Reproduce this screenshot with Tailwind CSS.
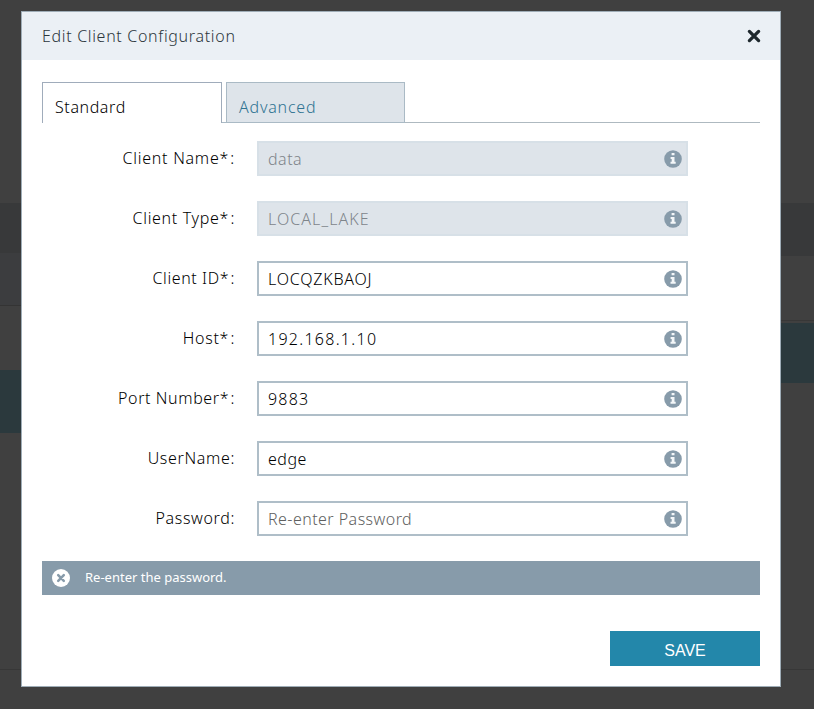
<!DOCTYPE html>
<html lang="en">
<head>
<meta charset="utf-8">
<title>Edit Client Configuration</title>
<script src="https://cdn.jsdelivr.net/npm/@tailwindcss/browser@4"></script>
</head>
<body class="relative flex h-[709px] w-[814px] justify-between overflow-hidden bg-[#404040] font-['Noto_Sans','Open_Sans',sans-serif] text-[16px] font-light text-black">
  <svg class="hidden">
    <symbol id="info" viewBox="0 0 18 18">
      <circle cx="9" cy="9" r="8.8" fill="#879baa"/>
      <path fill="#f4f7f9" d="M7.6 3h2.9v2.3H7.6zM6.6 7.1h3.9v4.7h1.2v2H6.5v-2h1.2V9.1H6.6z"/>
    </symbol>
  </svg>

  <!-- Dimmed page behind the dialog -->
  <div class="flex w-[22px] flex-col">
    <div class="h-[203px]"></div>
    <div class="h-[50px] bg-[#38393a]"></div>
    <div class="h-[52px] bg-[#3c3d3f]"></div>
    <div class="h-px bg-[#343434]"></div>
    <div class="h-[64px]"></div>
    <div class="h-[63px] bg-[#2b393d]"></div>
    <div class="h-[236px]"></div>
    <div class="h-px bg-[#373737]"></div>
  </div>
  <div class="flex w-[34px] flex-col">
    <div class="h-[203px]"></div>
    <div class="h-[53px] bg-[#38393a]"></div>
    <div class="h-[64px]"></div>
    <div class="h-px bg-[#373737]"></div>
    <div class="h-[2px]"></div>
    <div class="h-[60px] bg-[#2b393d]"></div>
    <div class="h-[286px]"></div>
    <div class="h-px bg-[#373737]"></div>
  </div>

  <div class="absolute left-[21px] top-[11px] flex h-[676px] w-[760px] flex-col border border-[#9fadb7] bg-white">
    <header class="flex h-[48px] shrink-0 items-center justify-between bg-[#ebf0f5] pl-5 pr-[19px]">
      <h1 class="font-light tracking-[0.68px] text-[#2c363b]">Edit Client Configuration</h1>
      <svg class="size-[14px]" viewBox="0 0 14 14"><path d="M2.4 2.4l9.2 9.2M11.6 2.4l-9.2 9.2" stroke="#1e282d" stroke-width="3.3" stroke-linecap="round"/></svg>
    </header>

    <nav class="mx-5 mt-[22px] flex h-[41px] shrink-0">
      <div class="flex w-[180px] items-end border border-b-0 border-[#a0acbb] px-3 pb-[4px] tracking-[0.6px]"><span>Standard</span></div>
      <div class="w-1 border-b border-[#aabac5]"></div>
      <div class="flex w-[179px] items-end border border-[#aabac5] bg-[#dee4ea] px-3 pb-[3px] tracking-[0.8px] text-[#2f7392]"><span>Advanced</span></div>
      <div class="flex-1 border-b border-[#aeb9c0]"></div>
    </nav>

    <form class="mt-[18px] flex flex-col gap-[25px] tracking-[0.5px]">
      <div class="flex h-[35px]"><label class="w-[213px] pt-[5px] text-right tracking-[0.75px]">Client Name<span class="tracking-[2px]">*</span>:</label><div class="ml-[22px] flex w-[431px] items-center justify-between border-2 border-[#d7e0e7] bg-[#dee4ea] pl-[9px] pr-1 text-[#7f858b]"><span>data</span><svg class="size-[18px]"><use href="#info"/></svg></div></div>
      <div class="flex h-[35px]"><label class="w-[213px] pt-[5px] text-right tracking-[0.68px]">Client Type<span class="tracking-[2px]">*</span>:</label><div class="ml-[22px] flex w-[431px] items-center justify-between border-2 border-[#d7e0e7] bg-[#dee4ea] pl-[9px] pr-1 text-[#7f858b]"><span class="tracking-[1.05px]">LOCAL_LAKE</span><svg class="size-[18px]"><use href="#info"/></svg></div></div>
      <div class="flex h-[35px]"><label class="w-[213px] pt-[5px] text-right tracking-[0.6px]">Client ID<span class="tracking-[2px]">*</span>:</label><div class="ml-[22px] flex w-[431px] items-center justify-between border-2 border-[#afbec8] pl-[9px] pr-1"><span class="tracking-[0.8px]">LOCQZKBAOJ</span><svg class="size-[18px]"><use href="#info"/></svg></div></div>
      <div class="flex h-[35px]"><label class="w-[213px] pt-[5px] text-right tracking-[0.7px]">Host<span class="tracking-[2px]">*</span>:</label><div class="ml-[22px] flex w-[431px] items-center justify-between border-2 border-[#afbec8] pl-[9px] pr-1"><span class="tracking-[1.28px]">192.168.1.10</span><svg class="size-[18px]"><use href="#info"/></svg></div></div>
      <div class="flex h-[35px]"><label class="w-[213px] pt-[5px] text-right tracking-[0.6px]">Port Number<span class="tracking-[2px]">*</span>:</label><div class="ml-[22px] flex w-[431px] items-center justify-between border-2 border-[#afbec8] pl-[9px] pr-1"><span class="tracking-[1.2px]">9883</span><svg class="size-[18px]"><use href="#info"/></svg></div></div>
      <div class="flex h-[35px]"><label class="w-[213px] pt-[5px] text-right tracking-[0.65px]">UserName:</label><div class="ml-[22px] flex w-[431px] items-center justify-between border-2 border-[#afbec8] pl-[9px] pr-1"><span>edge</span><svg class="size-[18px]"><use href="#info"/></svg></div></div>
      <div class="flex h-[35px]"><label class="w-[213px] pt-[5px] text-right tracking-[0.65px]">Password:</label><div class="ml-[22px] flex w-[431px] items-center justify-between border-2 border-[#afbec8] pl-[9px] pr-1 text-[#606060]"><span class="tracking-[0.45px]">Re-enter Password</span><svg class="size-[18px]"><use href="#info"/></svg></div></div>
    </form>

    <div class="mx-5 mt-[25px] flex h-[34px] shrink-0 items-center bg-[#879baa] pl-[10px] text-[13px] font-normal text-white">
      <svg class="size-[18px]" viewBox="0 0 18 18"><circle cx="9" cy="9" r="9" fill="#fff"/><path d="M6.2 6.2l5.6 5.6M11.8 6.2l-5.6 5.6" stroke="#879baa" stroke-width="2.5" stroke-linecap="round"/></svg>
      <span class="ml-[15px]">Re-enter the password.</span>
    </div>

    <button type="button" class="mr-5 mt-9 h-[35px] w-[150px] shrink-0 self-end bg-[#2387aa] pt-[4px] font-['Liberation_Sans',Arial,sans-serif] text-white">SAVE</button>
  </div>
</body>
</html>
